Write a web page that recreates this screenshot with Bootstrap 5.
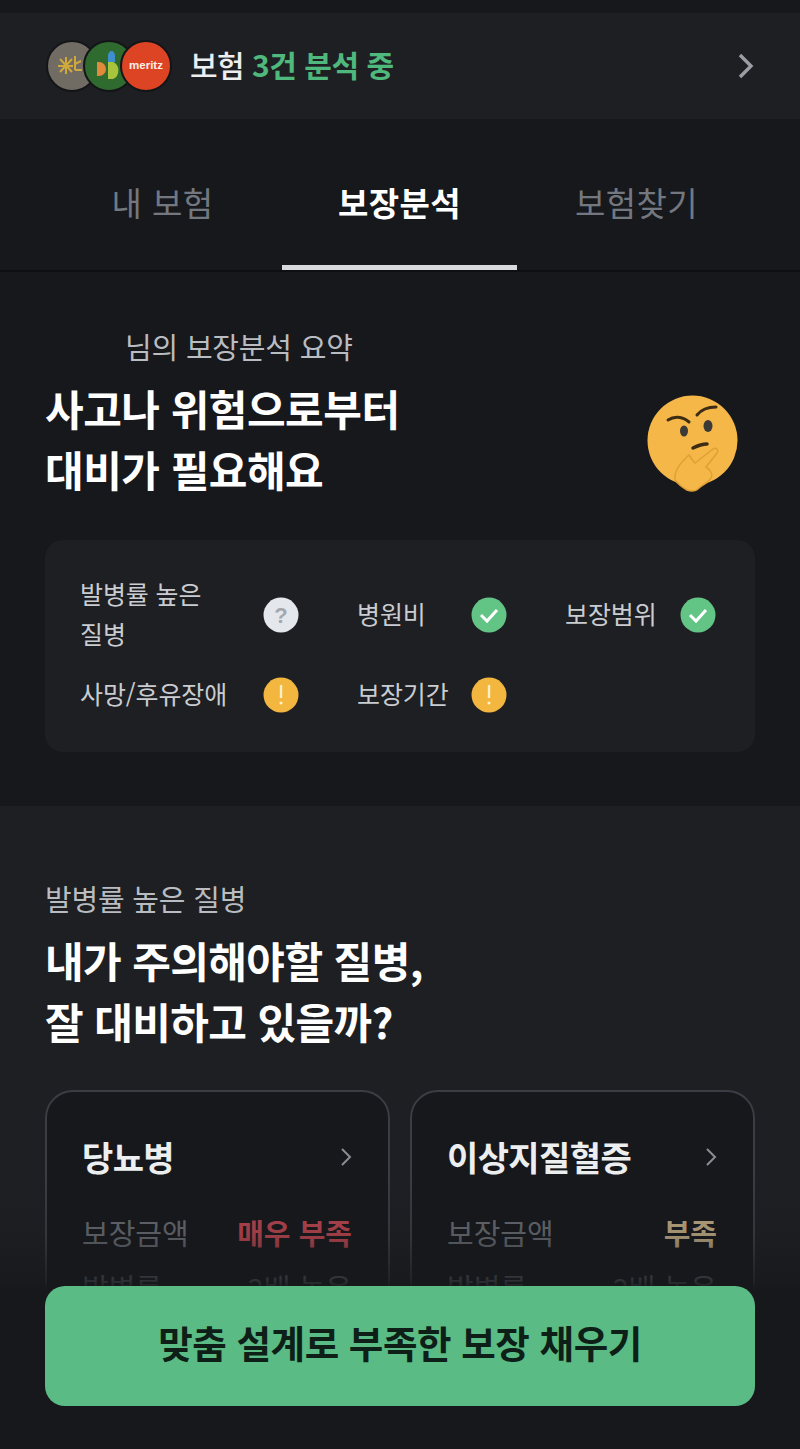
<!doctype html>
<html lang="ko">
<head>
    <meta charset="utf-8">
    <meta name="viewport" content="width=device-width, initial-scale=1">
    <title>보장분석</title>
    <link href="https://cdn.jsdelivr.net/npm/bootstrap@5.3.3/dist/css/bootstrap.min.css" rel="stylesheet">
    <style>
        body {
            background-color: #17181c;
            font-family: "Noto Sans CJK KR", "Noto Sans", sans-serif;
            color: #eceef0;
            width: 800px;
            height: 1449px;
            overflow: hidden;
            position: relative;
            margin: 0;
        }
        .top-banner {
            margin-top: 13px;
            height: 106px;
            background-color: #1e1f23;
            padding: 0 45px;
        }
        .logo-stack { width: 127px; height: 52px; position: relative; }
        .logo-dot {
            position: absolute;
            top: 0;
            width: 52px;
            height: 52px;
            border-radius: 50%;
            border: 2px solid #141518;
            overflow: hidden;
        }
        .banner-text { font-size: 30px; line-height: 40px; font-weight: 500; margin-left: 18px; margin-top: -5px; letter-spacing: -0.5px; }
        .banner-text b { color: #4fb87c; font-weight: 700; }
        .tab-bar { height: 153px; border-bottom: 2px solid #0e0f11; padding: 0 45px; gap: 2px; }
        .tab-item {
            width: 235px;
            text-align: center;
            font-size: 33px;
            line-height: 166px;
            color: #737880;
            height: 151px;
            letter-spacing: 0.4px;
        }
        .tab-item.active-tab {
            color: #fff;
            font-weight: 700;
            border-bottom: 5px solid #d8dadd;
        }
        .summary { height: 534px; padding: 52px 45px 0; }
        .sub-label { font-size: 29px; line-height: 44px; color: #b9bcc1; letter-spacing: -0.2px; }
        .big-title { font-size: 42px; line-height: 61px; font-weight: 700; color: #fff; letter-spacing: -0.5px; margin: 0; }
        .big-title.tight-title { letter-spacing: -0.6px; margin-top: 9px; }
        .title-row { margin-top: 9px; }
        .emoji-face { margin: 12px 13px 0 0; }
        .check-grid {
            background-color: #1e1f23;
            border-radius: 18px;
            height: 212px;
            margin-top: 41px;
            padding: 35px 40px 0 35px;
            display: grid;
            grid-template-columns: 219px 150px 151px;
            grid-template-rows: 80px 40px;
            column-gap: 58px;
            row-gap: 20px;
        }
        .check-cell { display: flex; align-items: center; justify-content: space-between; font-size: 25px; line-height: 40px; color: #c9ccd0; letter-spacing: -0.1px; }
        .check-cell span { padding-bottom: 4px; }
        .check-cell svg { flex: none; }
        .wrap-label { width: 130px; }
        .disease-sec { background-color: #1e1f23; height: 643px; padding: 70px 45px 0; }
        .disease-row { display: grid; grid-template-columns: 345px 345px; column-gap: 20px; margin-top: 39px; }
        .disease-card {
            background-color: #17181c;
            border: 2px solid #3a3d43;
            border-radius: 28px;
            padding: 32px 36px 0 35px;
            height: 300px;
        }
        .disease-name { font-size: 34px; font-weight: 700; line-height: 66px; color: #eceef0; letter-spacing: -0.6px; margin-bottom: 20px; }
        .disease-line { font-size: 29px; line-height: 44px; color: #686c72; margin-bottom: 11px; }
        .fade-bottom {
            position: absolute;
            left: 0; right: 0; top: 1090px; bottom: 0;
            background: linear-gradient(to bottom, rgba(23,24,28,0) 80px, rgba(23,24,28,.2) 145px, rgba(23,24,28,.7) 190px, #17181c 200px);
        }
        .fill-btn {
            position: absolute;
            left: 45px; top: 1286px;
            width: 710px; height: 120px;
            padding: 0 0 7px;
            background-color: #5bbb85;
            border: none;
            border-radius: 20px;
            font-size: 37.5px;
            font-weight: 700;
            color: #0e1f17;
            letter-spacing: -0.4px;
        }
        .level-bad { color: #bd4650; font-weight: 700; }
        .level-low { color: #c3ad85; font-weight: 700; }
        .meritz-dot { background: #dd4424; font-family: "Liberation Sans", sans-serif; font-size: 11.5px; font-weight: 700; color: #fbeee9; }
    </style>
</head>
<body>
    <div class="top-banner d-flex align-items-center">
        <div class="logo-stack">
            <div class="logo-dot" style="left:1px;background:#706b63">
                <svg width="48" height="48" viewBox="0 0 48 48" fill="none" stroke="#cfa83e" stroke-width="2"><path d="M10 24h15M18 15v17M12 17l12 13M24 17L12 30M27 14v14M27 22l6-3M27 28h7"/></svg>
            </div>
            <div class="logo-dot" style="left:38px;background:#2f6b2f">
                <svg width="48" height="48" viewBox="0 0 48 48"><path d="M12 20h2a7 7 0 0 1 0 14h-2z" fill="#e3893a"/><path d="M23 14a3.5 5 0 0 1 7 0v6h-7z" fill="#3f8fd0"/><path d="M23 20h5a8 9 0 0 1 0 17h-5z" fill="#a8c43c"/></svg>
            </div>
            <div class="logo-dot meritz-dot d-flex align-items-center justify-content-center" style="left:75px">meritz</div>
        </div>
        <div class="banner-text">보험 <b>3건 분석 중</b></div>
        <svg class="ms-auto" width="18" height="28" viewBox="0 0 18 28" fill="none" stroke="#9a9da3" stroke-width="3.4"><path d="M3 3l11 11L3 25"/></svg>
    </div>

    <div class="tab-bar d-flex">
        <div class="tab-item">내 보험</div>
        <div class="tab-item active-tab">보장분석</div>
        <div class="tab-item">보험찾기</div>
    </div>

    <section class="summary">
        <div class="sub-label" style="padding-left:80px">님의 보장분석 요약</div>
        <div class="title-row d-flex justify-content-between align-items-center">
            <h1 class="big-title">사고나 위험으로부터<br>대비가 필요해요</h1>
            <svg class="emoji-face" width="96" height="98" viewBox="0 0 96 98">
                <circle cx="46.5" cy="45.5" r="45" fill="#f4b748"/>
                <path d="M22 25c6-4 14-4 21 2M51 20c4-5 11-8 19-8" fill="none" stroke="#3d2c14" stroke-width="3" stroke-linecap="round"/>
                <ellipse cx="38" cy="36" rx="4" ry="5.5" fill="#3b3a36"/>
                <ellipse cx="62" cy="31" rx="4.5" ry="6" fill="#3b3a36"/>
                <path d="M47 53c4-2 9-4 14-4" fill="none" stroke="#3d2c14" stroke-width="3.5" stroke-linecap="round"/>
                <path d="M43 60c2 3 4 6 6 8l18-14c3-2 6 1 4 4L60 72c5 3 7 8 5 11-3 5-9 7-12 10-3 3-7 4-12 2-5-3-9-6-12-10-1-8 3-15 14-25z" fill="#f4b748" stroke="#e0a035" stroke-width="1.5"/>
            </svg>
        </div>
        <div class="check-grid">
            <div class="check-cell"><span class="wrap-label">발병률 높은 질병</span>
                <svg width="36" height="36" viewBox="0 0 36 36"><circle cx="18" cy="18" r="17.5" fill="#e4e7eb"/><text x="18" y="26" text-anchor="middle" font-size="22" font-weight="700" fill="#a4a8ae" font-family="Liberation Sans">?</text></svg>
            </div>
            <div class="check-cell"><span>병원비</span>
                <svg width="36" height="36" viewBox="0 0 36 36"><circle cx="18" cy="18" r="17.5" fill="#62c585"/><path d="M10 18l6 6 10-11" fill="none" stroke="#fff" stroke-width="3"/></svg>
            </div>
            <div class="check-cell"><span>보장범위</span>
                <svg width="36" height="36" viewBox="0 0 36 36"><circle cx="18" cy="18" r="17.5" fill="#62c585"/><path d="M10 18l6 6 10-11" fill="none" stroke="#fff" stroke-width="3"/></svg>
            </div>
            <div class="check-cell"><span>사망/후유장애</span>
                <svg width="36" height="36" viewBox="0 0 36 36"><circle cx="18" cy="18" r="17.5" fill="#f3b740"/><path d="M18 8v13" stroke="#fdeec4" stroke-width="2.4"/><circle cx="18" cy="26" r="1.6" fill="#fdeec4"/></svg>
            </div>
            <div class="check-cell"><span>보장기간</span>
                <svg width="36" height="36" viewBox="0 0 36 36"><circle cx="18" cy="18" r="17.5" fill="#f3b740"/><path d="M18 8v13" stroke="#fdeec4" stroke-width="2.4"/><circle cx="18" cy="26" r="1.6" fill="#fdeec4"/></svg>
            </div>
        </div>
    </section>

    <section class="disease-sec">
        <div class="sub-label">발병률 높은 질병</div>
        <h2 class="big-title tight-title">내가 주의해야할 질병,<br>잘 대비하고 있을까?</h2>
        <div class="disease-row">
            <div class="disease-card">
                <div class="d-flex justify-content-between align-items-center disease-name">당뇨병
                    <svg width="12" height="20" viewBox="0 0 12 20" fill="none" stroke="#8a8d93" stroke-width="2"><path d="M2 2l8 8-8 8"/></svg>
                </div>
                <div class="d-flex justify-content-between disease-line"><span>보장금액</span><span class="level-bad">매우 부족</span></div>
                <div class="d-flex justify-content-between disease-line"><span>발병률</span><span>2배 높음</span></div>
            </div>
            <div class="disease-card">
                <div class="d-flex justify-content-between align-items-center disease-name">이상지질혈증
                    <svg width="12" height="20" viewBox="0 0 12 20" fill="none" stroke="#8a8d93" stroke-width="2"><path d="M2 2l8 8-8 8"/></svg>
                </div>
                <div class="d-flex justify-content-between disease-line"><span>보장금액</span><span class="level-low">부족</span></div>
                <div class="d-flex justify-content-between disease-line"><span>발병률</span><span>2배 높음</span></div>
            </div>
        </div>
    </section>

    <div class="fade-bottom"></div>
    <button class="btn fill-btn" type="button">맞춤 설계로 부족한 보장 채우기</button>

    <script src="https://cdn.jsdelivr.net/npm/bootstrap@5.3.3/dist/js/bootstrap.bundle.min.js"></script>
</body>
</html>
